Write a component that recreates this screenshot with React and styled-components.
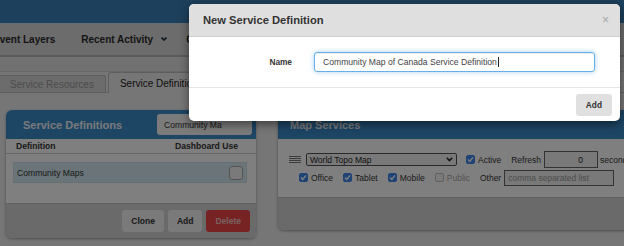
import React from "react";
import styled, { createGlobalStyle } from "styled-components";

const FONT = `"Liberation Sans", Arial, Helvetica, sans-serif`;

const GlobalStyle = createGlobalStyle`
  html, body { margin: 0; padding: 0; }
  body { font-family: ${FONT}; background: #ececec; overflow: hidden; }
  * { box-sizing: border-box; }
`;

const Page = styled.div`
  position: relative;
  width: 624px;
  height: 246px;
  overflow: hidden;
  background: #ececec;
  display: flex;
  flex-direction: column;
`;

const TopBar = styled.header`
  flex: none;
  height: 23px;
  background: #3a80b8;
`;

const NavBar = styled.nav`
  flex: none;
  height: 34px;
  background: #d8d8d8;
  border-bottom: 2px solid #b4b4b4;
  display: flex;
  align-items: center;
  overflow: hidden;
`;

const NavList = styled.ul`
  list-style: none;
  margin: 0 0 0 -7px;
  padding: 0;
  display: flex;
  align-items: center;
  white-space: nowrap;
`;

const NavItem = styled.li`
  font-size: 10px;
  font-weight: bold;
  color: #2a2a2a;
  margin-right: ${(p) => p.$gap || 0}px;
  display: flex;
  align-items: center;
`;

const NavCaret = styled.svg`
  margin-left: 8px;
`;

const SubBar = styled.div`
  flex: none;
  height: 15px;
  background: #e2e2e2;
  border-bottom: 1px solid #cfcfcf;
`;

const TabRow = styled.div`
  flex: none;
  height: 21px;
  display: flex;
  align-items: flex-end;
  border-bottom: 1px solid #bdbdbd;
`;

const Tab = styled.div`
  height: ${(p) => (p.$active ? 21 : 17)}px;
  padding: 0 11px;
  display: flex;
  align-items: center;
  font-size: 10px;
  white-space: nowrap;
  color: ${(p) => (p.$active ? "#1e1e1e" : "#9a9a9a")};
  background: ${(p) => (p.$active ? "#ececec" : "#d9d9d9")};
  border: 1px solid #bdbdbd;
  border-bottom: none;
  border-radius: 3px 3px 0 0;
  margin-bottom: ${(p) => (p.$active ? -1 : 0)}px;
  margin-left: ${(p) => (p.$first ? -2 : 2)}px;
`;

const Content = styled.main`
  flex: 1;
  display: flex;
  align-items: flex-start;
  gap: 22px;
  padding: 17px 0 0 6px;
`;

const Panel = styled.section`
  flex: none;
  width: ${(p) => p.$w}px;
  background: #fff;
  border-radius: 6px;
  box-shadow: 0 1px 3px rgba(0, 0, 0, 0.35);
  overflow: hidden;
  display: flex;
  flex-direction: column;
`;

const PanelHeader = styled.div`
  height: 29px;
  background: #3b8bc9;
  color: #eef3f8;
  display: flex;
  align-items: center;
  justify-content: space-between;
  padding: 0 4px 0 ${(p) => p.$pl}px;
  font-weight: bold;
  font-size: 11px;
  white-space: nowrap;
`;

const HeaderField = styled.div`
  width: 95px;
  height: 21px;
  background: #f6f6f6;
  border-radius: 3px;
  color: #333;
  font-weight: normal;
  font-size: 8.6px;
  display: flex;
  align-items: center;
  padding-left: 7px;
`;

const ColumnHead = styled.div`
  height: 15px;
  border-bottom: 1px solid #c8c8c8;
  display: flex;
  align-items: center;
  justify-content: space-between;
  padding: 0 18px 0 10px;
  font-size: 8.6px;
  font-weight: bold;
  color: #333;
`;

const ListArea = styled.div`
  padding: 8px 9px 20px 7px;
`;

const DefRow = styled.div`
  height: 21px;
  background: #d6ebf3;
  border: 1px solid #cbe1ea;
  display: flex;
  align-items: center;
  justify-content: space-between;
  padding: 0 3px;
  font-size: 8.6px;
  color: #333;
`;

const BigCheck = styled.span`
  width: 14px;
  height: 14px;
  border: 1px solid #a8a8a8;
  border-radius: 3px;
  background: #f4f4f4;
`;

const PanelFooter = styled.div`
  height: ${(p) => p.$h}px;
  background: #d4d4d4;
  border-top: 1px solid #c2c2c2;
  display: flex;
  justify-content: flex-end;
  align-items: flex-start;
  gap: 4px;
  padding: 6px 6px 0 0;
`;

const Button = styled.button`
  height: 22px;
  padding: 0 9px;
  border: none;
  border-radius: 3px;
  font-family: ${FONT};
  font-size: 8.5px;
  font-weight: bold;
  color: ${(p) => (p.$danger ? "#f3c4c4" : "#333")};
  background: ${(p) => (p.$danger ? "#f04646" : "#f4f4f4")};
`;

const MapBody = styled.div`
  height: 58px;
  padding: 12px 0 0 11px;
  display: flex;
  flex-direction: column;
  gap: 1px;
  font-size: 8.5px;
  color: #333;
  white-space: nowrap;
`;

const FormRow = styled.div`
  height: 17px;
  display: flex;
  align-items: center;
  padding-left: ${(p) => p.$indent || 0}px;
`;

const Handle = styled.svg`
  margin-right: 5px;
  flex: none;
`;

const SelectBox = styled.div`
  width: 151px;
  height: 13px;
  border: 1px solid #555;
  border-radius: 2px;
  background: #f2f2f2;
  display: flex;
  align-items: center;
  justify-content: space-between;
  padding: 0 3px 0 3px;
  margin-right: 9px;
  color: #222;
`;

const Check = styled.span`
  flex: none;
  width: 9px;
  height: 9px;
  border-radius: 2px;
  display: inline-flex;
  align-items: center;
  justify-content: center;
  background: ${(p) => (p.$on ? "#3f86e8" : "#f6f6f6")};
  border: 1px solid ${(p) => (p.$on ? "#3f86e8" : "#bdbdbd")};
  margin-right: 3px;
`;

const Opt = styled.label`
  display: inline-flex;
  align-items: center;
  margin-right: 10px;
  color: ${(p) => (p.$disabled ? "#a8a8a8" : "#333")};
`;

const Word = styled.span`
  margin-right: 3px;
`;

const Field = styled.div`
  flex: none;
  width: ${(p) => p.$w}px;
  height: ${(p) => p.$h}px;
  border: 1px solid #666;
  background: #f2f2f2;
  display: flex;
  align-items: center;
  justify-content: ${(p) => (p.$right ? "flex-end" : "flex-start")};
  padding: ${(p) => (p.$right ? "0 14px 0 0" : "0 0 0 3px")};
  margin-right: 2px;
  color: ${(p) => (p.$placeholder ? "#9a9a9a" : "#222")};
`;

const Overlay = styled.div`
  position: absolute;
  inset: 0;
  background: rgba(0, 0, 0, 0.5);
  z-index: 1;
`;

const Modal = styled.div`
  position: absolute;
  left: 189px;
  top: 4px;
  width: 431px;
  background: #fff;
  border-radius: 5px;
  box-shadow: 0 3px 10px rgba(0, 0, 0, 0.5);
  z-index: 2;
  overflow: hidden;
`;

const ModalHeader = styled.div`
  height: 33px;
  background: #dfdfdf;
  border-bottom: 1px solid #cfcfcf;
  display: flex;
  align-items: center;
  justify-content: space-between;
  padding: 0 11px 0 14px;
`;

const ModalTitle = styled.h4`
  margin: 0;
  font-size: 11.2px;
  font-weight: bold;
  color: #333;
`;

const Close = styled.span`
  font-size: 12px;
  color: #a6a6a6;
  line-height: 1;
`;

const ModalBody = styled.div`
  height: 50px;
  display: grid;
  grid-template-columns: 103px 1fr;
  column-gap: 22px;
  align-items: center;
  padding-right: 25px;
`;

const FieldLabel = styled.label`
  text-align: right;
  font-size: 8.3px;
  font-weight: bold;
  color: #333;
`;

const FocusInput = styled.div`
  height: 20px;
  border: 1px solid #66afe9;
  border-radius: 3px;
  box-shadow: inset 0 1px 1px rgba(0, 0, 0, 0.075), 0 0 5px rgba(102, 175, 233, 0.6);
  display: flex;
  align-items: center;
  padding-left: 8px;
  font-size: 8.6px;
  color: #444;
  white-space: nowrap;
`;

const Caret = styled.span`
  display: inline-block;
  width: 1px;
  height: 10px;
  background: #222;
  margin-left: 1px;
`;

const ModalFooter = styled.div`
  height: 34px;
  border-top: 1px solid #e6e6e6;
  display: flex;
  justify-content: flex-end;
  align-items: center;
  padding-right: 8px;
`;

const ModalButton = styled.button`
  height: 22px;
  padding: 0 10px;
  border: none;
  border-radius: 3px;
  background: #e0e0e0;
  font-family: ${FONT};
  font-size: 8.3px;
  font-weight: bold;
  color: #333;
`;

const Tick = () => (
  <svg width="7" height="7" viewBox="0 0 7 7">
    <path d="M1 3.6 L2.8 5.4 L6 1.4" fill="none" stroke="#fff" strokeWidth="1.4" />
  </svg>
);

const Option = ({ on, disabled, children }) => (
  <Opt $disabled={disabled}>
    <Check $on={on}>{on && <Tick />}</Check>
    {children}
  </Opt>
);

export default function App() {
  return (
    <>
      <GlobalStyle />
      <Page>
        <TopBar />
        <NavBar>
          <NavList>
            <NavItem $gap={26}>Event Layers</NavItem>
            <NavItem $gap={19}>
              Recent Activity
              <NavCaret width="6" height="4" viewBox="0 0 6 4">
                <path d="M0.5 0.5 L3 3 L5.5 0.5" fill="none" stroke="#1a2a3a" strokeWidth="1.6" />
              </NavCaret>
            </NavItem>
            <NavItem>Configuration</NavItem>
          </NavList>
        </NavBar>
        <SubBar />
        <TabRow>
          <Tab $first>Service Resources</Tab>
          <Tab $active>Service Definitions</Tab>
        </TabRow>
        <Content>
          <Panel $w={250}>
            <PanelHeader $pl={17}>
              Service Definitions
              <HeaderField>Community Ma</HeaderField>
            </PanelHeader>
            <ColumnHead>
              <span>Definition</span>
              <span>Dashboard Use</span>
            </ColumnHead>
            <ListArea>
              <DefRow>
                <span>Community Maps</span>
                <BigCheck />
              </DefRow>
            </ListArea>
            <PanelFooter $h={35}>
              <Button>Clone</Button>
              <Button>Add</Button>
              <Button $danger>Delete</Button>
            </PanelFooter>
          </Panel>
          <Panel $w={360}>
            <PanelHeader $pl={12}>Map Services</PanelHeader>
            <MapBody>
              <FormRow>
                <Handle width="12" height="7" viewBox="0 0 12 7">
                  <path d="M0 0.5 H12 M0 2.5 H12 M0 4.5 H12 M0 6.5 H12" stroke="#7a7a7a" strokeWidth="1" />
                </Handle>
                <SelectBox>
                  World Topo Map
                  <svg width="7" height="5" viewBox="0 0 7 5">
                    <path d="M0.8 0.8 L3.5 3.6 L6.2 0.8" fill="none" stroke="#222" strokeWidth="1.5" />
                  </svg>
                </SelectBox>
                <Option on>Active</Option>
                <Word>Refresh</Word>
                <Field $w={54} $h={17} $right>0</Field>
                <span>seconds</span>
              </FormRow>
              <FormRow $indent={10}>
                <Option on>Office</Option>
                <Option on>Tablet</Option>
                <Option on>Mobile</Option>
                <Option disabled>Public</Option>
                <Word>Other</Word>
                <Field $w={110} $h={16} $placeholder>comma separated list</Field>
              </FormRow>
            </MapBody>
            <PanelFooter $h={33} />
          </Panel>
        </Content>
        <Overlay />
        <Modal>
          <ModalHeader>
            <ModalTitle>New Service Definition</ModalTitle>
            <Close>×</Close>
          </ModalHeader>
          <ModalBody>
            <FieldLabel>Name</FieldLabel>
            <FocusInput>
              Community Map of Canada Service Definition
              <Caret />
            </FocusInput>
          </ModalBody>
          <ModalFooter>
            <ModalButton>Add</ModalButton>
          </ModalFooter>
        </Modal>
      </Page>
    </>
  );
}
